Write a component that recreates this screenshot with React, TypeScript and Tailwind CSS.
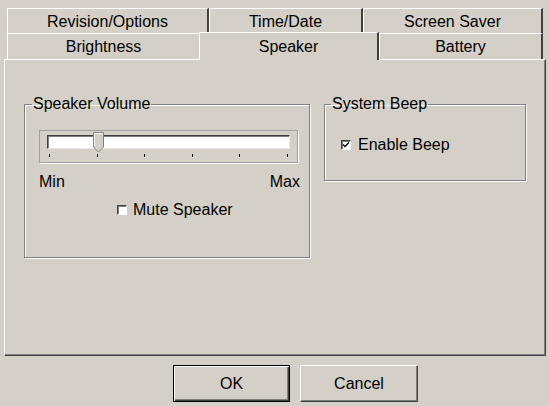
import React from "react";

function Tab({ label, w, selected = false }: { label: string; w: string; selected?: boolean }) {
  if (selected) {
    return (
      <div
        className={`${w} relative z-10 -mt-[1px] -mb-[1px] h-[28px] flex items-center justify-center bg-[#d4d0c8] border-t border-l border-white border-r-2 border-r-[#404040]`}
      >
        {label}
      </div>
    );
  }
  return (
    <div
      className={`${w} h-full flex items-center justify-center pt-[1px] border-t border-l border-white border-r-2 border-r-[#404040]`}
    >
      {label}
    </div>
  );
}

function Check({ checked }: { checked?: boolean }) {
  return (
    <span className="w-[10px] h-[10px] bg-white border-t border-l border-t-[#404040] border-l-[#404040] border-b border-r border-b-white border-r-white shadow-[inset_1px_1px_0_#808080] flex items-center justify-center">
      {checked && (
        <svg width="8" height="8" viewBox="0 0 8 8">
          <path d="M1 3.5 L3 5.5 L7 1.5" stroke="#000" strokeWidth="1.3" fill="none" />
        </svg>
      )}
    </span>
  );
}

export default function App() {
  return (
    <div
      className="w-[549px] h-[406px] bg-[#d4d0c8] text-black text-[16px] pt-[8px] overflow-hidden"
      style={{ fontFamily: '"Liberation Sans", Arial, sans-serif' }}
    >
      {/* top tab row */}
      <div className="ml-[7px] h-[25px] flex">
        <Tab label="Revision/Options" w="w-[202px]" />
        <Tab label="Time/Date" w="w-[154px]" />
        <Tab label="Screen Saver" w="w-[180px]" />
      </div>

      {/* bottom tab row */}
      <div className="ml-[7px] h-[26px] flex items-end">
        <div className="w-[192px] h-[26px] flex items-center justify-center pt-[1px] border-t border-l border-white">
          Brightness
        </div>
        <Tab label="Speaker" w="w-[180px]" selected />
        <Tab label="Battery" w="w-[164px]" />
      </div>

      {/* panel */}
      <div className="ml-[4px] w-[542px] h-[297px] border-t border-l border-white border-r border-b border-r-[#404040] border-b-[#404040] shadow-[inset_-1px_-1px_0_#808080] pt-[35px] pl-[19px] flex gap-[14px] items-start">
        <fieldset className="w-[286px] h-[163px] min-w-0 border border-[#808080] shadow-[inset_1px_1px_0_#fff,1px_1px_0_#fff] pl-[14px] pr-[11px] m-0">
          <legend className="px-[1px] -ml-[7px] leading-[18px]">Speaker Volume</legend>
          <div className="mt-[17px] w-[259px] h-[33px] border border-[#a0a0a0] shadow-[1px_1px_0_#fff] pt-[4px] px-[7px]">
            <div className="relative h-[14px] bg-white border-t border-l border-[#404040] border-b border-r border-b-[#e8e8e8] border-r-[#e8e8e8] shadow-[inset_1px_1px_0_#808080]">
              <svg className="absolute left-[45px] -top-[4px]" width="11" height="21" viewBox="0 0 11 21">
                <path d="M0.5 0.5 H10.5 V15 L5.5 20 L0.5 15 Z" fill="#d4d0c8" stroke="#808080" />
                <path d="M1.5 14.5 V1.5 H9.5" stroke="#fff" fill="none" />
              </svg>
            </div>
            <div className="mt-[5px] flex justify-between px-[2px]">
              {[0, 1, 2, 3, 4, 5].map((i) => (
                <span key={i} className="w-[1px] h-[3px] bg-black" />
              ))}
            </div>
          </div>
          <div className="mt-[10px] flex justify-between -mr-[2px] leading-[18px]">
            <span>Min</span>
            <span>Max</span>
          </div>
          <div className="mt-[10px] ml-[78px] flex items-center gap-[6px] leading-[18px]">
            <Check />
            <span>Mute Speaker</span>
          </div>
        </fieldset>

        <fieldset className="w-[202px] h-[86px] min-w-0 border border-[#808080] shadow-[inset_1px_1px_0_#fff,1px_1px_0_#fff] px-[16px] m-0">
          <legend className="px-[1px] -ml-[10px] leading-[18px]">System Beep</legend>
          <div className="mt-[23px] flex items-center gap-[7px] leading-[18px]">
            <Check checked />
            <span>Enable Beep</span>
          </div>
        </fieldset>
      </div>

      {/* buttons */}
      <div className="mt-[9px] ml-[173px] flex gap-[10px]">
        <button className="w-[117px] h-[37px] border border-black shadow-[inset_1px_1px_0_#fff,inset_-1px_-1px_0_#404040,inset_-2px_-2px_0_#808080] bg-[#d4d0c8]">
          OK
        </button>
        <button className="w-[118px] h-[37px] border-t border-l border-white border-r border-b border-r-[#404040] border-b-[#404040] shadow-[inset_-1px_-1px_0_#808080] bg-[#d4d0c8]">
          Cancel
        </button>
      </div>
    </div>
  );
}
